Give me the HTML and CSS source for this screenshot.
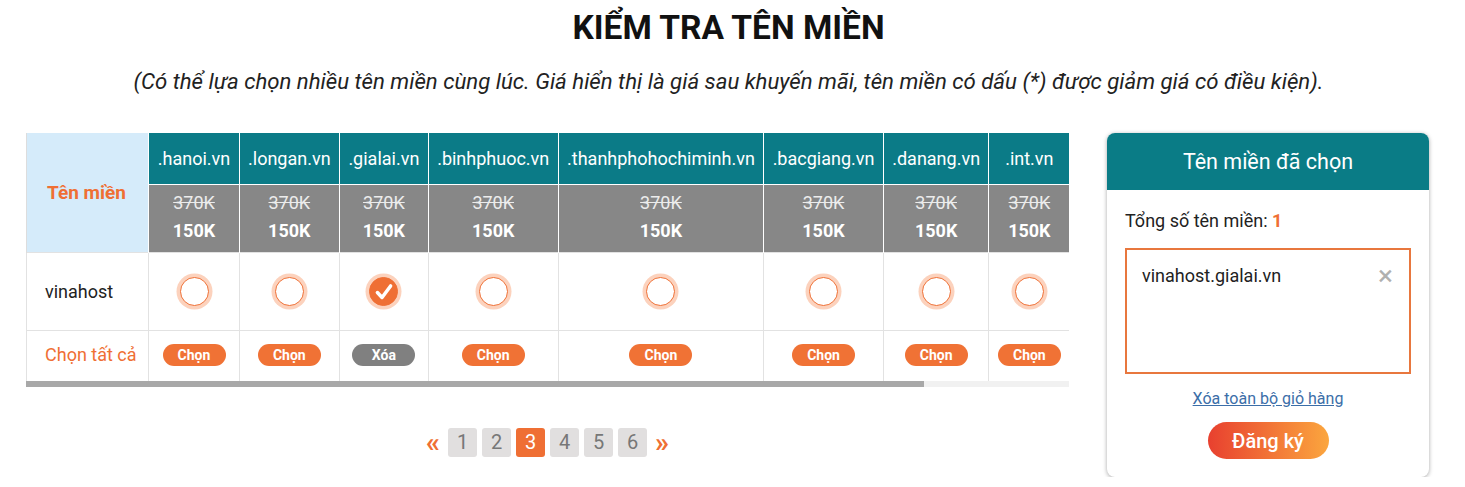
FILE: index.html
```html
<!DOCTYPE html>
<html>

<head>
    <title>Kiểm tra tên miền</title>
    <link rel="stylesheet" href="styles.css">
</head>

<body>
    <div class="page-wrap">
        <h1 class="title">KIỂM TRA TÊN MIỀN</h1>
        <p class="subtitle">(Có thể lựa chọn nhiều tên miền cùng lúc. Giá hiển thị là giá sau khuyến mãi, tên miền có dấu (*) được giảm giá có điều kiện).</p>

        <div class="main">
            <div class="left">
                <div class="table-wrap">
                    <table class="domains">
                        <tr class="row-head">
                            <th class="first" rowspan="2">Tên miền</th>
                            <th>.hanoi.vn</th>
                            <th>.longan.vn</th>
                            <th>.gialai.vn</th>
                            <th>.binhphuoc.vn</th>
                            <th>.thanhphohochiminh.vn</th>
                            <th>.bacgiang.vn</th>
                            <th>.danang.vn</th>
                            <th>.int.vn</th>
                            <th class="filler"></th>
                        </tr>
                        <tr class="row-price">
                            <td><s>370K</s><b>150K</b></td>
                            <td><s>370K</s><b>150K</b></td>
                            <td><s>370K</s><b>150K</b></td>
                            <td><s>370K</s><b>150K</b></td>
                            <td><s>370K</s><b>150K</b></td>
                            <td><s>370K</s><b>150K</b></td>
                            <td><s>370K</s><b>150K</b></td>
                            <td><s>370K</s><b>150K</b></td>
                            <td class="filler"></td>
                        </tr>
                        <tr class="row-radio">
                            <td class="first name">vinahost</td>
                            <td><span class="radio"></span></td>
                            <td><span class="radio"></span></td>
                            <td><span class="radio checked">
                                <svg width="22" height="22" viewBox="0 0 20 20"><path d="M4 10.5 L8.2 15 L16 4.5" fill="none" stroke="#fff" stroke-width="3.2" stroke-linecap="round" stroke-linejoin="round"/></svg>
                            </span></td>
                            <td><span class="radio"></span></td>
                            <td><span class="radio"></span></td>
                            <td><span class="radio"></span></td>
                            <td><span class="radio"></span></td>
                            <td><span class="radio"></span></td>
                            <td class="filler"></td>
                        </tr>
                        <tr class="row-btn">
                            <td class="first all">Chọn tất cả</td>
                            <td><span class="pill">Chọn</span></td>
                            <td><span class="pill">Chọn</span></td>
                            <td><span class="pill gray">Xóa</span></td>
                            <td><span class="pill">Chọn</span></td>
                            <td><span class="pill">Chọn</span></td>
                            <td><span class="pill">Chọn</span></td>
                            <td><span class="pill">Chọn</span></td>
                            <td><span class="pill">Chọn</span></td>
                            <td class="filler"></td>
                        </tr>
                    </table>
                </div>
                <div class="scrollbar"><div class="thumb"></div></div>

                <div class="pager">
                    <span class="arrow">&laquo;</span>
                    <span class="page">1</span>
                    <span class="page">2</span>
                    <span class="page active">3</span>
                    <span class="page">4</span>
                    <span class="page">5</span>
                    <span class="page">6</span>
                    <span class="arrow">&raquo;</span>
                </div>
            </div>

            <div class="cart">
                <div class="cart-head">Tên miền đã chọn</div>
                <div class="cart-body">
                    <div class="total">Tổng số tên miền: <b>1</b></div>
                    <div class="cart-box">
                        <div class="cart-item">
                            <span>vinahost.gialai.vn</span>
                            <span class="remove">&times;</span>
                        </div>
                    </div>
                    <a class="clear" href="#">Xóa toàn bộ giỏ hàng</a>
                    <button class="register" type="button">Đăng ký</button>
                </div>
            </div>
        </div>
    </div>
</body>

</html>
```

FILE: styles.css
```css
body {
    font-family: Roboto, Arial, sans-serif;
    margin: 0;
    padding: 0;
    background-color: #fff;
    color: #222;
}

.page-wrap {
    width: 1457px;
}

.title {
    text-align: center;
    font-size: 33.5px;
    font-weight: bold;
    margin: 8px 0 0;
    line-height: 40px;
    color: #111;
}

.subtitle {
    text-align: center;
    font-style: italic;
    font-size: 22.2px;
    line-height: 26px;
    margin: 20px 0 0;
    color: #222;
}

.main {
    display: flex;
    align-items: flex-start;
    gap: 38px;
    padding-left: 26px;
    margin-top: 39px;
}

.left {
    width: 1043px;
}

.table-wrap {
    overflow: hidden;
}

.scrollbar {
    height: 6px;
    background-color: #f1f1f1;
}

.scrollbar .thumb {
    width: 898px;
    height: 6px;
    background-color: #a8a8a8;
}

.domains {
    border-collapse: collapse;
    white-space: nowrap;
    font-size: 18px;
    width: max-content;
}

.domains th,
.domains td {
    padding: 0 8.4px;
    text-align: center;
}

.domains .filler {
    width: 120px;
}

.row-head th {
    background-color: #0b7b87;
    color: #fff;
    font-weight: normal;
    height: 51px;
    border: 1px solid #fff;
    border-top: none;
}

.domains th.first {
    background-color: #d5ebfa;
    color: #ef6f34;
    font-weight: bold;
    font-size: 19px;
    text-align: left;
    padding-left: 20px;
    width: 93px;
    border-left: 1px solid #ddd;
    border-bottom: none;
}

.row-price td {
    background-color: #878787;
    color: #fff;
    height: 64px;
    border: 1px solid #fff;
    border-bottom: none;
    padding-bottom: 3px;
}

.row-price s {
    display: block;
    color: #ececec;
    line-height: 28px;
}

.row-price b {
    display: block;
    line-height: 28px;
}

.row-radio td,
.row-btn td {
    border: 1px solid #e2e2e2;
}

.row-radio td {
    height: 77px;
}

.row-btn td {
    height: 47px;
    border-bottom: none;
    padding-bottom: 3px;
}

.domains td.first {
    text-align: left;
    padding-left: 18px;
}

.name {
    color: #222;
}

.all {
    color: #ef6f34;
}

.radio {
    display: inline-flex;
    align-items: center;
    justify-content: center;
    width: 27px;
    height: 27px;
    border: 1.5px solid #ef6f34;
    border-radius: 50%;
    background-color: #fff;
    box-shadow: 0 0 0 3.5px #fcd2bd;
    vertical-align: middle;
}

.radio.checked {
    background-color: #ef6f34;
}

.pill {
    display: inline-block;
    width: 63px;
    height: 22px;
    line-height: 22px;
    border-radius: 11px;
    background-color: #f07235;
    color: #fff;
    font-size: 14px;
    font-weight: bold;
    vertical-align: middle;
}

.pill.gray {
    background-color: #808080;
}

.pager {
    display: flex;
    justify-content: center;
    align-items: center;
    gap: 5px;
    margin-top: 41px;
}

.arrow {
    color: #ef6f34;
    font-size: 28px;
    font-weight: bold;
    line-height: 28px;
    margin: 0 3px;
}

.page {
    width: 29px;
    height: 29px;
    line-height: 29px;
    text-align: center;
    background-color: #e1dfdf;
    color: #777;
    border-radius: 3px;
    font-size: 20px;
}

.page.active {
    background-color: #ef6f34;
    color: #fff;
}

.cart {
    width: 322px;
    border-radius: 8px;
    box-shadow: 0 1px 4px rgba(0, 0, 0, 0.35);
    overflow: hidden;
    background-color: #fff;
}

.cart-head {
    background-color: #0a7c86;
    color: #fff;
    text-align: center;
    font-size: 21.5px;
    height: 57px;
    line-height: 58px;
}

.cart-body {
    padding: 20px 18px 18px;
    display: flex;
    flex-direction: column;
    align-items: center;
}

.total {
    align-self: flex-start;
    font-size: 18px;
    line-height: 22px;
}

.total b {
    color: #ef6f34;
}

.cart-box {
    align-self: stretch;
    box-sizing: border-box;
    border: 2px solid #e8773e;
    height: 126px;
    margin-top: 16px;
    padding: 14px 16px 0 15px;
}

.cart-item {
    display: flex;
    justify-content: space-between;
    font-size: 18px;
    line-height: 24px;
}

.remove {
    color: #b0b0b0;
    font-size: 28px;
    line-height: 24px;
}

.clear {
    margin-top: 15px;
    color: #3b6ea8;
    font-size: 16px;
}

.register {
    margin-top: 14px;
    width: 121px;
    height: 37px;
    border: none;
    border-radius: 19px;
    background: linear-gradient(to right, #e8402f, #fba63e);
    color: #fff;
    font-family: Roboto, Arial, sans-serif;
    font-size: 20px;
    font-weight: 500;
}
```
